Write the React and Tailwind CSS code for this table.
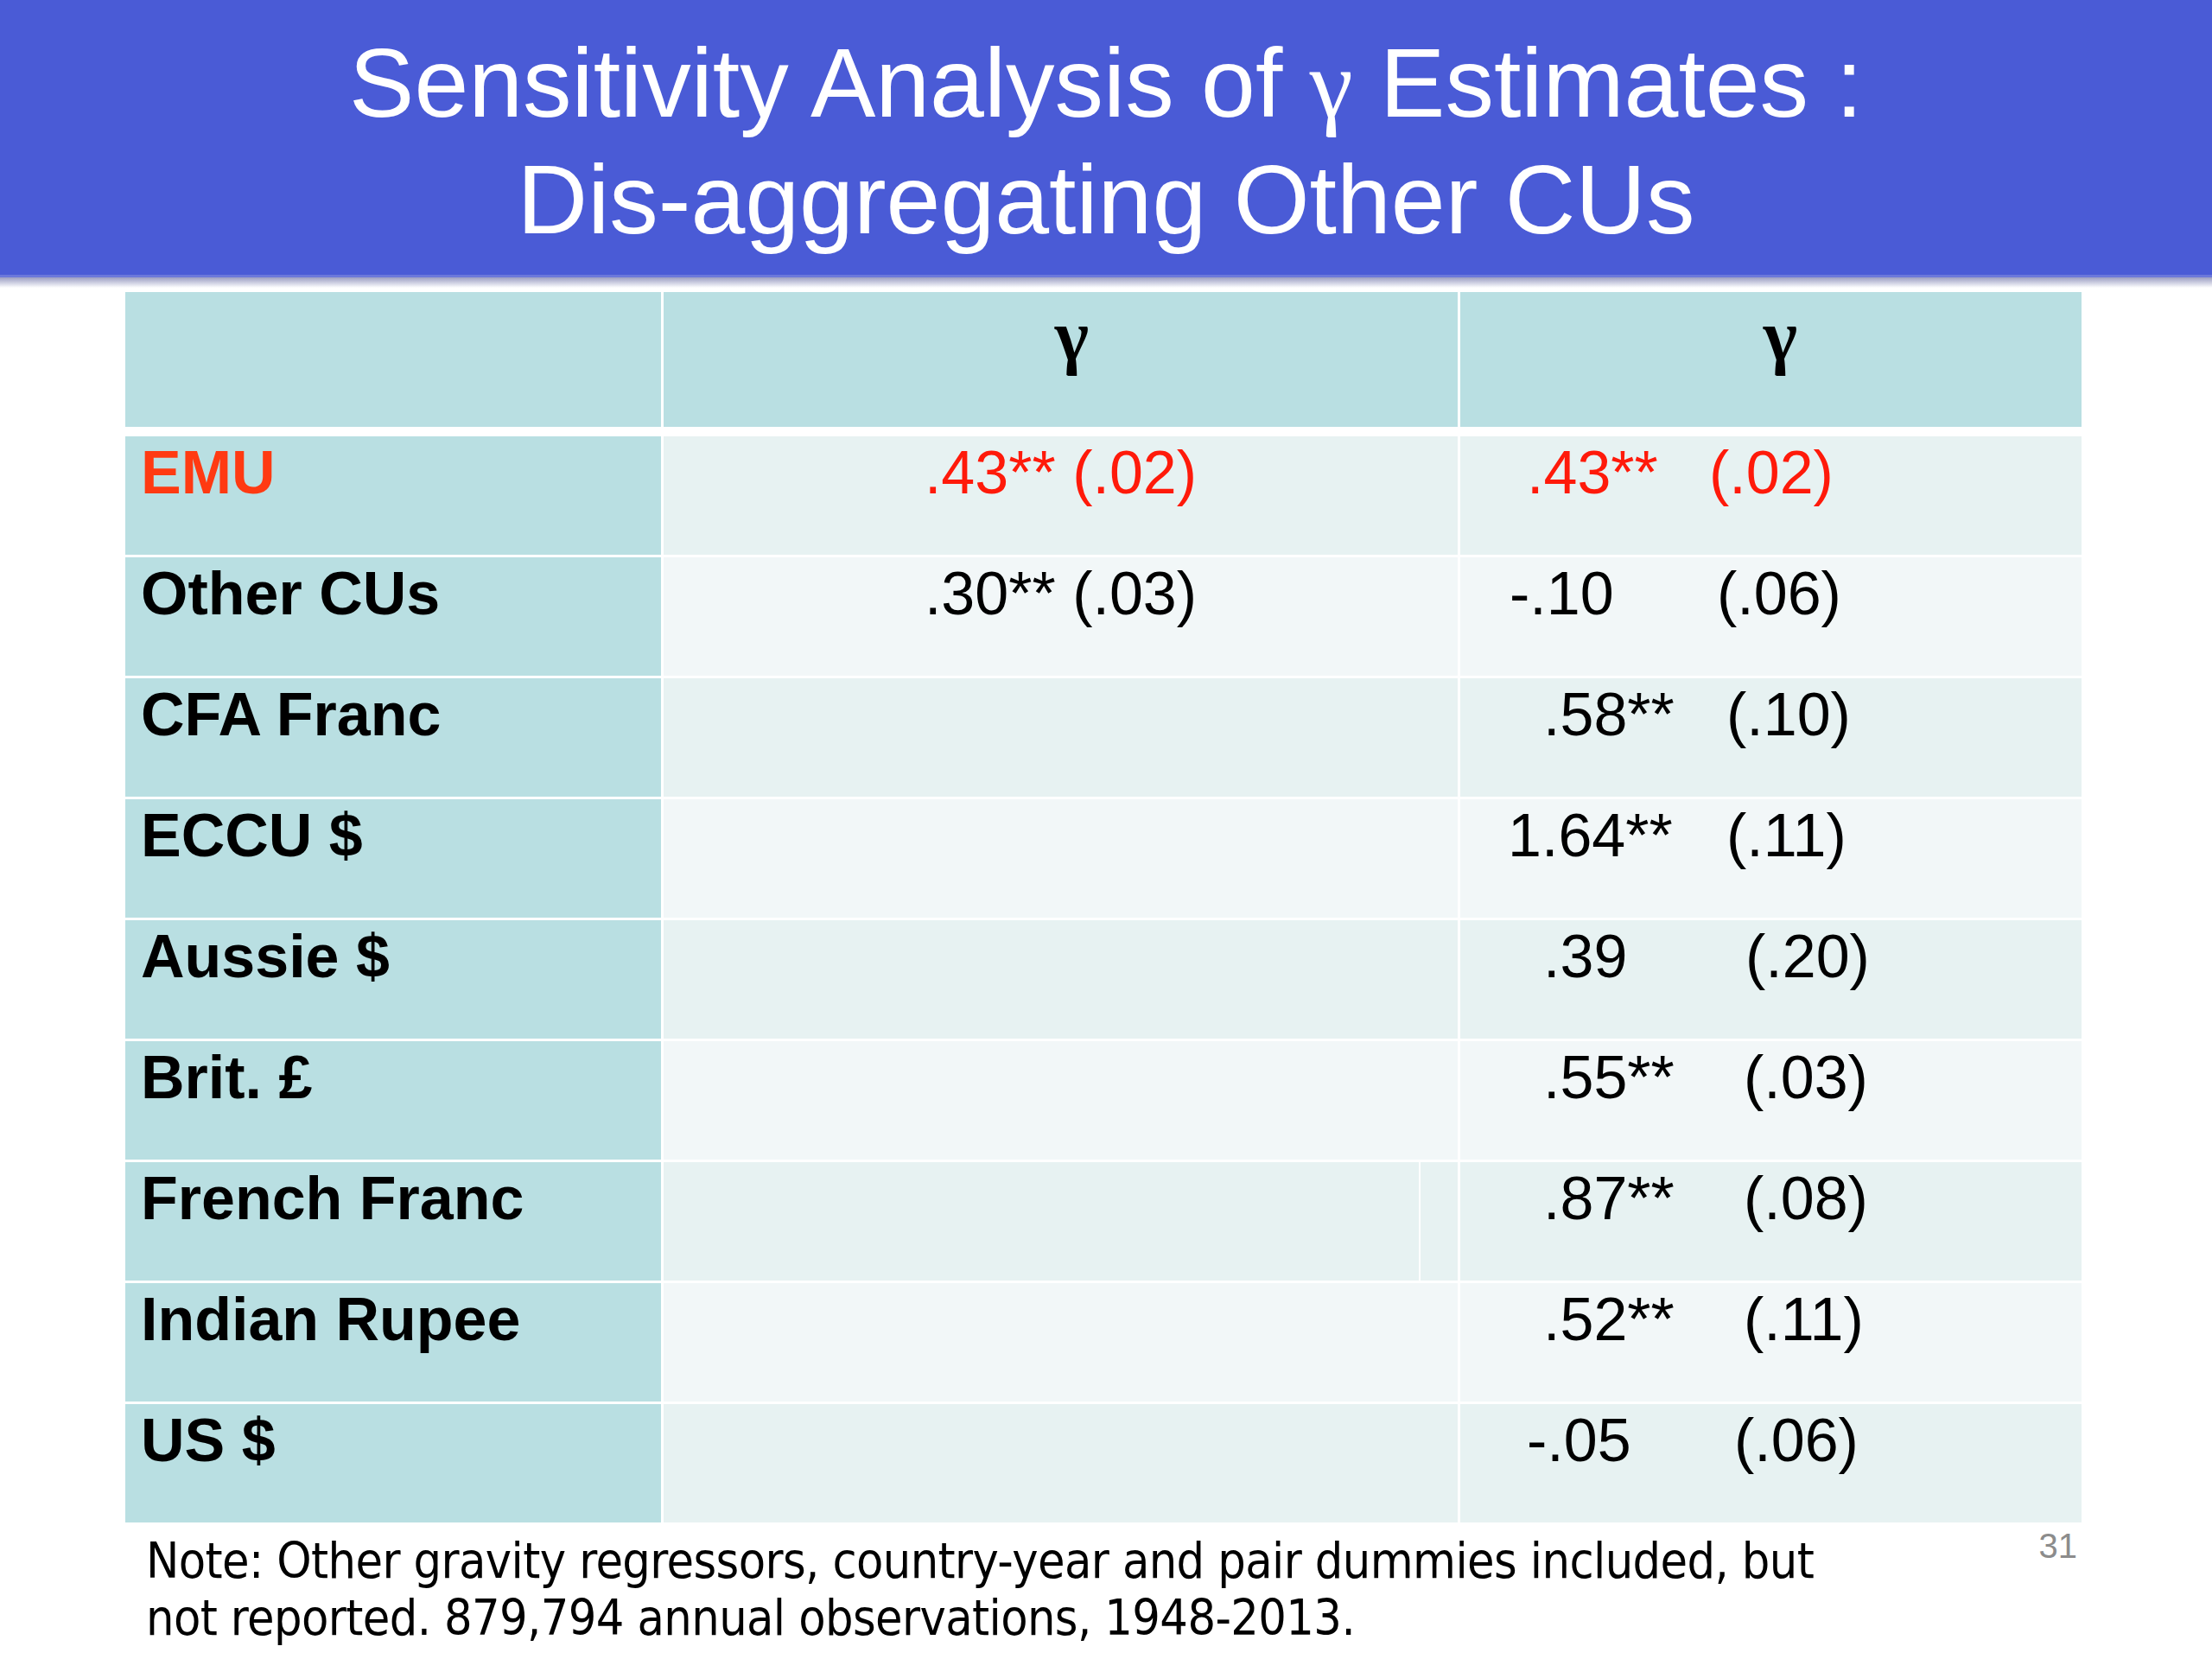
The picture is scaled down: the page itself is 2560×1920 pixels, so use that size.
import React from 'react';

const SANS = "font-['Liberation_Sans',Arial,sans-serif]";

const rows = [
    { label: 'EMU', mid: '.43** (.02)', v: '.43**', s: '(.02)', pos: 'ml-[77px] w-[211px]', red: true },
    { label: 'Other CUs', mid: '.30** (.03)', v: '-.10', s: '(.06)', pos: 'ml-[57px] w-[240px]' },
    { label: 'CFA Franc', v: '.58**', s: '(.10)', pos: 'ml-[96px] w-[212px]' },
    { label: 'ECCU $', v: '1.64**', s: '(.11)', pos: 'ml-[55px] w-[253px]' },
    { label: 'Aussie $', v: '.39', s: '(.20)', pos: 'ml-[96px] w-[234px]' },
    { label: 'Brit. £', v: '.55**', s: '(.03)', pos: 'ml-[96px] w-[232px]' },
    { label: 'French Franc', v: '.87**', s: '(.08)', pos: 'ml-[96px] w-[232px]', split: true },
    { label: 'Indian Rupee', v: '.52**', s: '(.11)', pos: 'ml-[96px] w-[232px]' },
    { label: 'US $', v: '-.05', s: '(.06)', pos: 'ml-[77px] w-[240px]' },
];

/* ── one body row of the table ── */
function Row({ row, index }) {
    const cellBg = index % 2 === 0 ? 'bg-[#e7f2f2]' : 'bg-[#f2f7f8]';
    const ink = row.red ? 'text-[#ff1a0a]' : 'text-black';
    return (
        <div className="grid grid-cols-[620px_919px_719px] gap-x-[3px] h-[137px]">
            <div className={`bg-[#b9dfe2] pl-[18px] pt-[2px] text-[70px] leading-[80px] font-bold ${row.red ? 'text-[#ff3a12]' : 'text-black'}`}>
                {row.label}
            </div>
            {row.split ? (
                <div className="flex gap-x-[2px]">
                    <div className={`w-[874px] ${cellBg}`} />
                    <div className={`flex-1 ${cellBg}`} />
                </div>
            ) : (
                <div className={`${cellBg} ${ink} text-center pt-[2px] text-[70px] leading-[80px]`}>
                    {row.mid}
                </div>
            )}
            <div className={`${cellBg} ${ink} flex pt-[2px] text-[70px] leading-[80px] whitespace-pre`}>
                <span className={`shrink-0 ${row.pos}`}>{row.v}</span>
                <span>{row.s}</span>
            </div>
        </div>
    );
}

export default function App() {
    return (
        <div className={`w-[2560px] h-[1920px] bg-white overflow-hidden ${SANS}`}>
            {/* title band */}
            <header className="h-[318px] bg-[#4a5bd6] pt-[29px] text-center text-white text-[113px] leading-[134px]">
                Sensitivity Analysis of <span className="font-['Liberation_Serif',serif]">γ</span> Estimates :
                <br />
                Dis-aggregating Other CUs
            </header>
            <div className="h-[3px] bg-[#6b78db]" />
            <div className="h-[12px] bg-gradient-to-b from-[#9c9ec2] to-white" />

            {/* table */}
            <div className="ml-[145px] mt-[5px] w-[2264px]">
                <div className="grid grid-cols-[620px_919px_719px] gap-x-[3px] h-[156px] text-[84px] leading-[84px] font-bold font-['Liberation_Serif',serif]">
                    <div className="bg-[#b9dfe2]" />
                    <div className="bg-[#b9dfe2] pt-[9px] pl-[26px] text-center">γ</div>
                    <div className="bg-[#b9dfe2] pt-[9px] pl-[22px] text-center">γ</div>
                </div>
                <div className="mt-[11px] flex flex-col gap-y-[3px]">
                    {rows.map((r, i) => <Row key={r.label} row={r} index={i} />)}
                </div>
            </div>

            {/* note + slide number */}
            <div className="ml-[145px] w-[2264px] mt-[11px] flex justify-between items-start">
                <p className="pl-[24px] text-[57px] leading-[66px] tracking-[-0.6px] text-black font-['DejaVu_Sans_Condensed','DejaVu_Sans',sans-serif] font-stretch-condensed">
                    Note: Other gravity regressors, country-year and pair dummies included, but
                    <br />
                    not reported. 879,794 annual observations, 1948-2013.
                </p>
                <span className="-mt-[4px] pr-[5px] text-[40px] leading-[40px] text-[#8c8c8c]">31</span>
            </div>
        </div>
    );
}
